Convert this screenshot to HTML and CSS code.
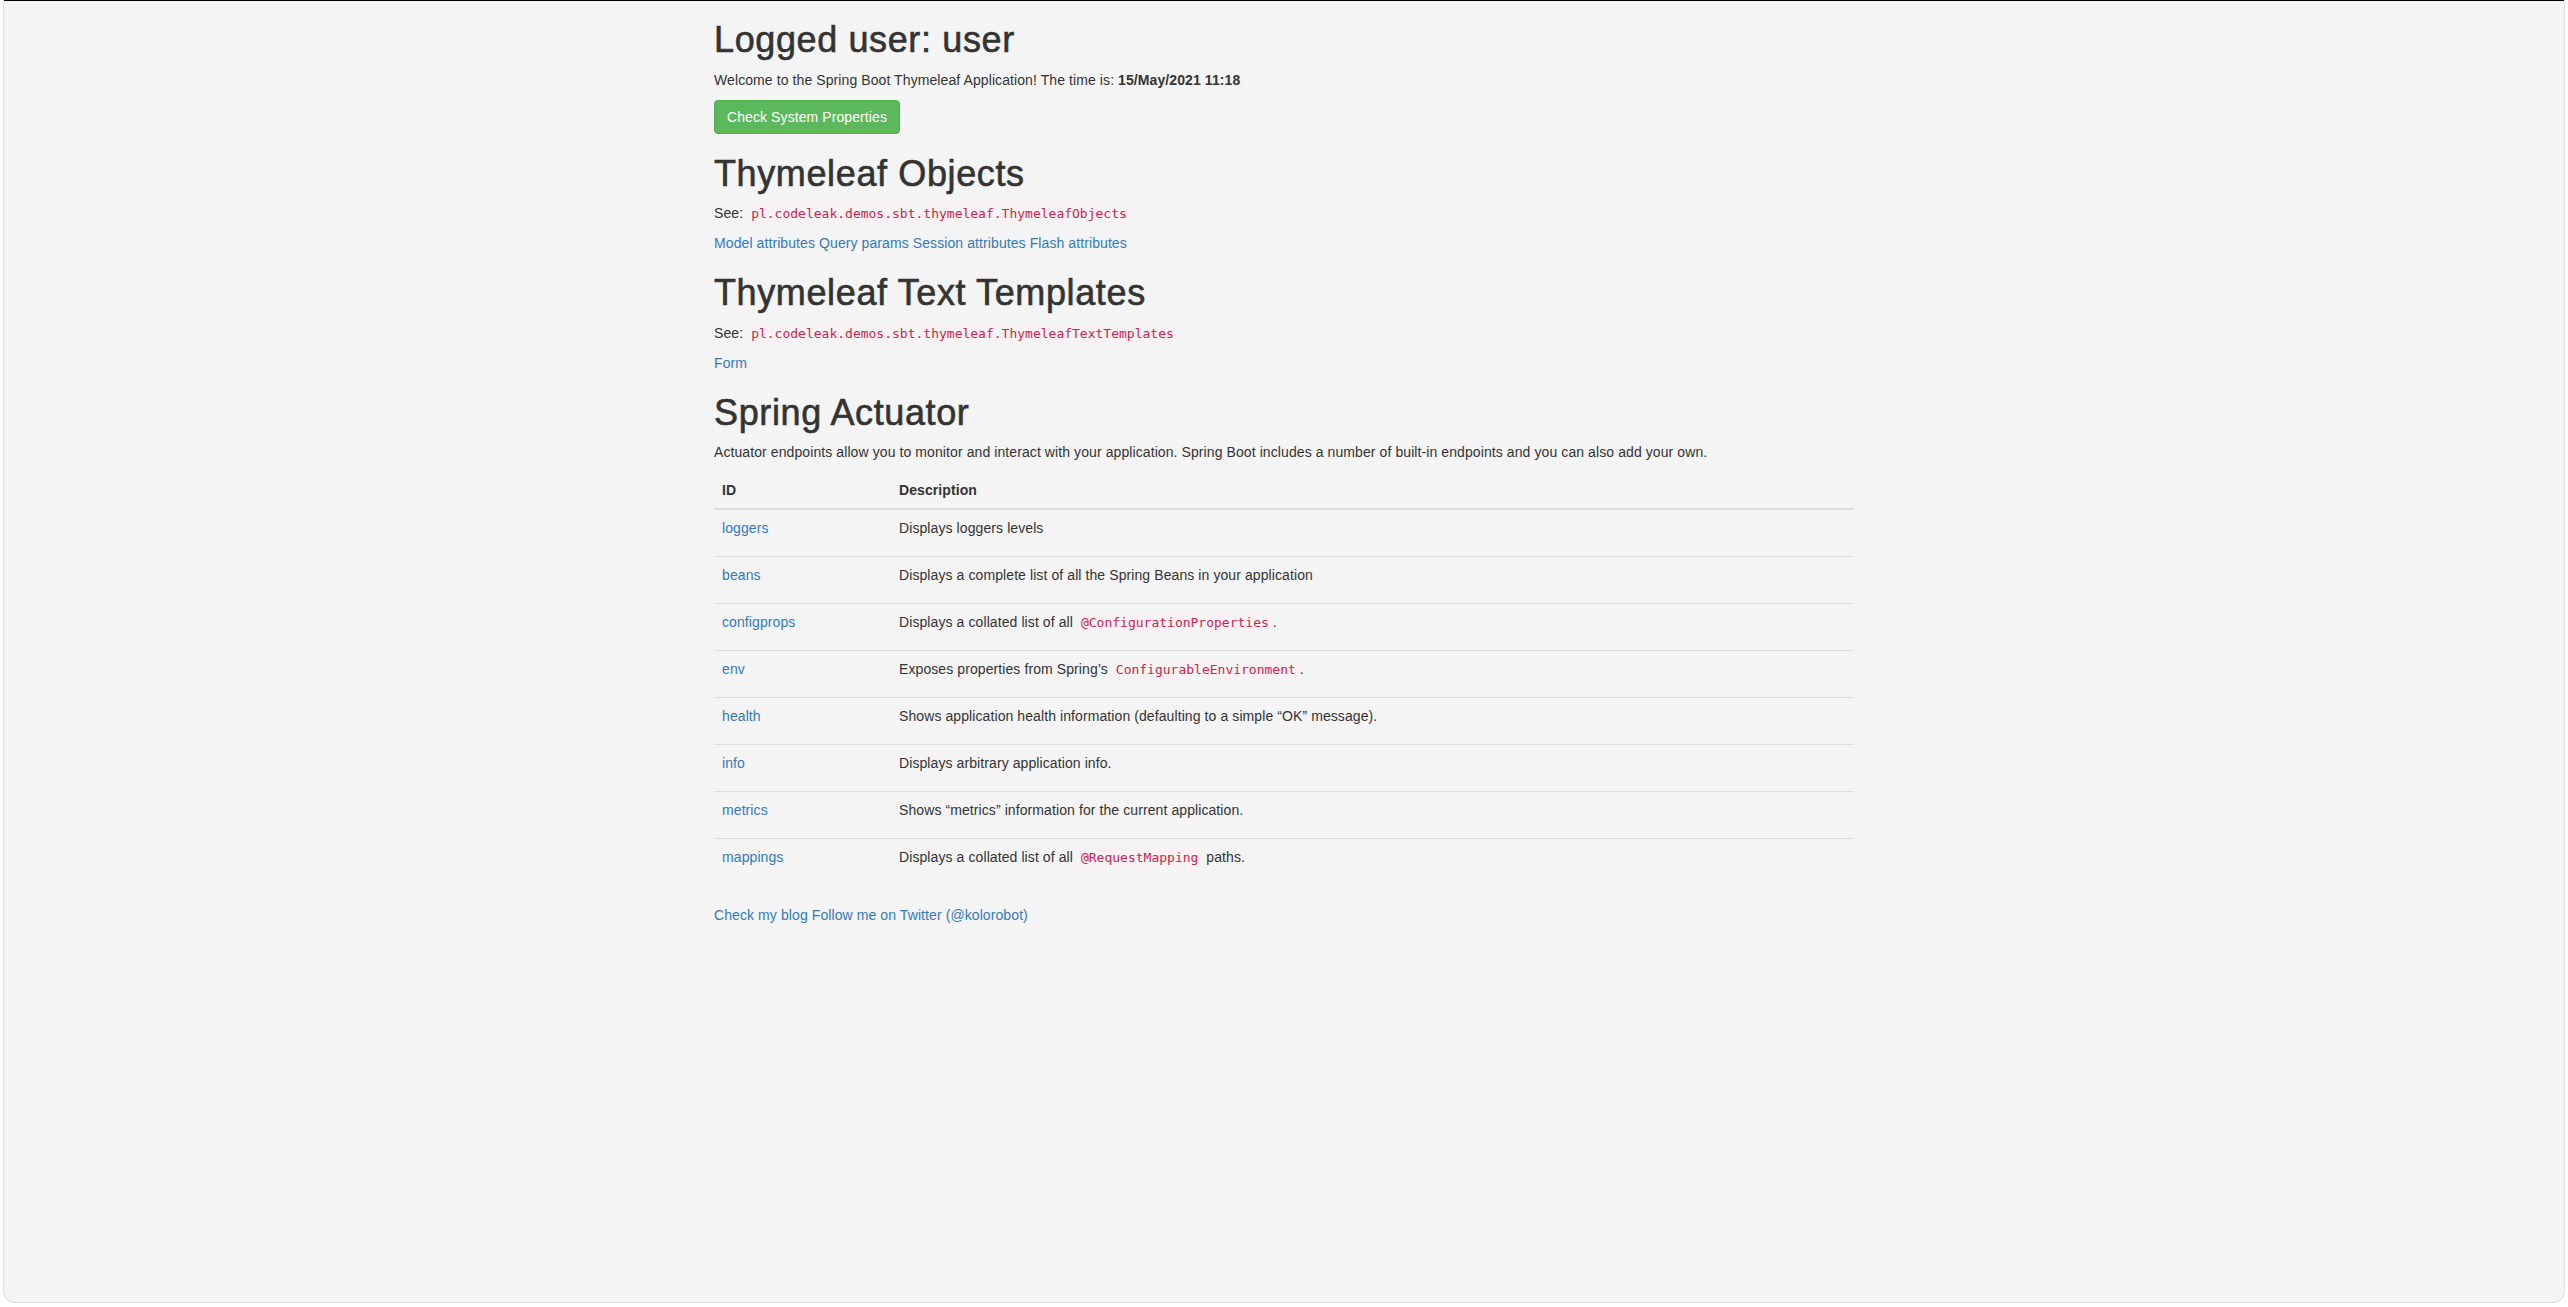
FILE: index.html
```html
<!DOCTYPE html>
<html lang="en">
<head>
<meta charset="utf-8">
<title>Spring Boot Thymeleaf</title>
<link rel="stylesheet" href="styles.css">
</head>
<body>
<div class="window">
  <div class="container">
    <h1>Logged user: <span>user</span></h1>
    <p>Welcome to the Spring Boot Thymeleaf Application! The time is: <strong>15/May/2021 11:18</strong></p>
    <div class="actions"><a class="btn btn-success" href="#">Check System Properties</a></div>

    <h1>Thymeleaf Objects</h1>
    <p>See: <code>pl.codeleak.demos.sbt.thymeleaf.ThymeleafObjects</code></p>
    <p><a href="#">Model attributes</a> <a href="#">Query params</a> <a href="#">Session attributes</a> <a href="#">Flash attributes</a></p>

    <h1>Thymeleaf Text Templates</h1>
    <p>See: <code>pl.codeleak.demos.sbt.thymeleaf.ThymeleafTextTemplates</code></p>
    <p><a href="#">Form</a></p>

    <h1>Spring Actuator</h1>
    <p>Actuator endpoints allow you to monitor and interact with your application. Spring Boot includes a number of built-in endpoints and you can also add your own.</p>
    <table class="table">
      <thead>
        <tr><th class="col-id">ID</th><th>Description</th></tr>
      </thead>
      <tbody>
        <tr><td><a href="#">loggers</a></td><td><p>Displays loggers levels</p></td></tr>
        <tr><td><a href="#">beans</a></td><td><p>Displays a complete list of all the Spring Beans in your application</p></td></tr>
        <tr><td><a href="#">configprops</a></td><td><p>Displays a collated list of all <code>@ConfigurationProperties</code>.</p></td></tr>
        <tr><td><a href="#">env</a></td><td><p>Exposes properties from Spring’s <code>ConfigurableEnvironment</code>.</p></td></tr>
        <tr><td><a href="#">health</a></td><td><p>Shows application health information (defaulting to a simple “OK” message).</p></td></tr>
        <tr><td><a href="#">info</a></td><td><p>Displays arbitrary application info.</p></td></tr>
        <tr><td><a href="#">metrics</a></td><td><p>Shows “metrics” information for the current application.</p></td></tr>
        <tr><td><a href="#">mappings</a></td><td><p>Displays a collated list of all <code>@RequestMapping</code> paths.</p></td></tr>
      </tbody>
    </table>
    <div class="footer"><a href="#">Check my blog</a> <a href="#">Follow me on Twitter (@kolorobot)</a></div>
  </div>
</div>
</body>
</html>
```

FILE: styles.css
```css
* {
  box-sizing: border-box;
}

html, body {
  margin: 0;
  padding: 0;
  background: #ffffff;
}

body {
  font-family: "Liberation Sans", Arial, sans-serif;
  font-size: 14px;
  line-height: 20px;
  letter-spacing: 0.09px;
  color: #333333;
}

.window {
  margin: 0 3px;
  height: 1303px;
  background: #f4f4f4;
  box-shadow: inset 0 1px 0 #000000;
  border-left: 1px solid #e2e2e2;
  border-right: 1px solid #e2e2e2;
  border-bottom: 1px solid #dcdcdc;
  border-radius: 0 0 12px 12px;
  overflow: hidden;
}

.container {
  width: 1170px;
  margin: 0 auto;
  padding: 0 15px;
}

h1 {
  font-family: "Liberation Sans", Arial, sans-serif;
  font-size: 36px;
  font-weight: 500;
  line-height: 39.6px;
  margin: 20px 0 10px;
  color: #333333;
  letter-spacing: 0.62px;
  -webkit-text-stroke: 0.6px #333333;
}

p {
  margin: 0 0 10px;
}

strong {
  font-weight: bold;
}

a {
  color: #337ab7;
  text-decoration: none;
}

code {
  font-family: "DejaVu Sans Mono", Menlo, monospace;
  font-size: 13px;
  line-height: 1;
  letter-spacing: 0;
  padding: 2px 4px;
  color: #c7254e;
  background-color: #f9f2f4;
  border-radius: 4px;
}

.actions {
  line-height: 20px;
}

.btn {
  display: inline-block;
  padding: 6px 12px;
  font-size: 14px;
  line-height: 20px;
  border: 1px solid transparent;
  border-radius: 4px;
  vertical-align: top;
}

.btn-success {
  color: #ffffff;
  background-color: #5cb85c;
  border-color: #4cae4c;
}

.table {
  width: 100%;
  border-collapse: collapse;
  border-spacing: 0;
  margin: 0 0 20px;
}

.table th {
  text-align: left;
  font-weight: bold;
  padding: 8px;
  vertical-align: bottom;
  border-bottom: 2px solid #dddddd;
}

.table th.col-id {
  width: 177px;
}

.table td {
  padding: 8px;
  vertical-align: top;
  border-top: 1px solid #dddddd;
}

.table tbody tr:first-child td {
  border-top: 0;
}

.footer {
  line-height: 20px;
}
```
